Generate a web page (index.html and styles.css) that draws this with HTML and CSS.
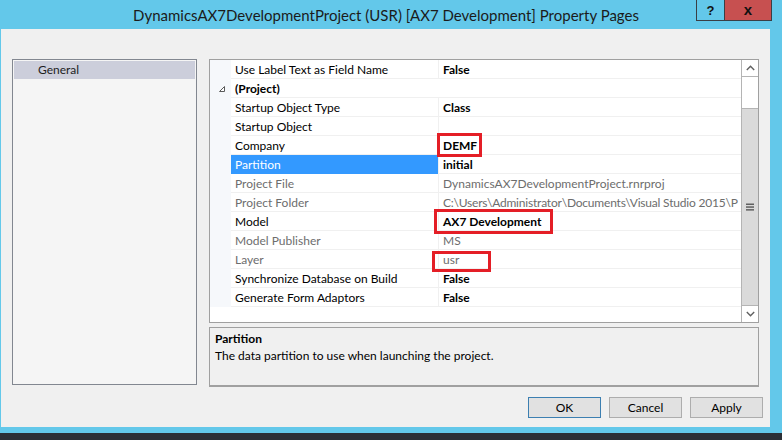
FILE: index.html
```
<!DOCTYPE html>
<html>
<head>
<meta charset="utf-8">
<link rel="stylesheet" href="styles.css">
</head>
<body>
<div class="window">
  <div class="titlebar">
    <div class="title">DynamicsAX7DevelopmentProject (USR) [AX7 Development] Property Pages</div>
    <div class="caption-buttons">
      <div class="cap-btn help">?</div>
      <div class="cap-btn close">x</div>
    </div>
  </div>
  <div class="client">
    <div class="main">
      <div class="nav">
        <div class="nav-item selected">General</div>
      </div>
      <div class="right">
        <div class="grid">
          <div class="rows">
            <div class="row"><div class="gut"></div><div class="lbl">Use Label Text as Field Name</div><div class="val b">False</div></div>
            <div class="row cat"><div class="gut"><svg width="8" height="8" viewBox="0 0 8 8"><polygon points="6.5,1.5 6.5,6.5 1.5,6.5" fill="#ffffff" stroke="#5a5a5a" stroke-width="1"/></svg></div><div class="lbl b">(Project)</div></div>
            <div class="row"><div class="gut"></div><div class="lbl">Startup Object Type</div><div class="val b">Class</div></div>
            <div class="row"><div class="gut"></div><div class="lbl">Startup Object</div><div class="val"></div></div>
            <div class="row"><div class="gut"></div><div class="lbl">Company</div><div class="val b">DEMF</div></div>
            <div class="row"><div class="gut"></div><div class="lbl sel">Partition</div><div class="val b">initial</div></div>
            <div class="row dim"><div class="gut"></div><div class="lbl">Project File</div><div class="val">DynamicsAX7DevelopmentProject.rnrproj</div></div>
            <div class="row dim"><div class="gut"></div><div class="lbl">Project Folder</div><div class="val tight">C:\Users\Administrator\Documents\Visual Studio 2015\P</div></div>
            <div class="row"><div class="gut"></div><div class="lbl">Model</div><div class="val b">AX7 Development</div></div>
            <div class="row dim"><div class="gut"></div><div class="lbl">Model Publisher</div><div class="val">MS</div></div>
            <div class="row dim"><div class="gut"></div><div class="lbl">Layer</div><div class="val">usr</div></div>
            <div class="row"><div class="gut"></div><div class="lbl">Synchronize Database on Build</div><div class="val b">False</div></div>
            <div class="row"><div class="gut"></div><div class="lbl">Generate Form Adaptors</div><div class="val b">False</div></div>
            <div class="mark mark-company"></div>
            <div class="mark mark-model"></div>
            <div class="mark mark-layer"></div>
          </div>
          <div class="scrollbar">
            <div class="sb-btn up"><svg width="9" height="6" viewBox="0 0 9 6"><polyline points="0.8,5 4.5,1.3 8.2,5" fill="none" stroke="#606060" stroke-width="1.4"/></svg></div>
            <div class="sb-gap"></div>
            <div class="sb-thumb"><svg width="8" height="8" viewBox="0 0 8 8"><rect x="0" y="0.5" width="8" height="1.5" fill="#606060"/><rect x="0" y="3.3" width="8" height="1.5" fill="#606060"/><rect x="0" y="6.1" width="8" height="1.5" fill="#606060"/></svg></div>
            <div class="sb-btn down"><svg width="9" height="6" viewBox="0 0 9 6"><polyline points="0.8,1 4.5,4.7 8.2,1" fill="none" stroke="#606060" stroke-width="1.4"/></svg></div>
          </div>
        </div>
        <div class="desc">
          <div class="desc-title">Partition</div>
          <div class="desc-text">The data partition to use when launching the project.</div>
        </div>
      </div>
    </div>
    <div class="buttons">
      <div class="btn default">OK</div>
      <div class="btn">Cancel</div>
      <div class="btn">Apply</div>
    </div>
  </div>
  <div class="bottom-edge"></div>
</div>
</body>
</html>
```
FILE: styles.css
```
html, body {
  margin: 0;
  padding: 0;
}
body {
  width: 782px;
  height: 440px;
  overflow: hidden;
  font-family: "Lato", "Liberation Sans", sans-serif;
  font-size: 12px;
  color: #000;
}
.window {
  width: 782px;
  height: 440px;
  background: #63c8ea;
  display: flex;
  flex-direction: column;
}
.titlebar {
  height: 29px;
  display: grid;
  grid-template-columns: 1fr;
  flex: none;
}
.title {
  grid-area: 1 / 1;
  text-align: center;
  padding-right: 10px;
  font-size: 15px;
  line-height: 30px;
  color: #1b1b1b;
}
.caption-buttons {
  grid-area: 1 / 1;
  justify-self: end;
  align-self: start;
  margin-right: 10px;
  display: flex;
  height: 21px;
  border: 1px solid #3a3f45;
  border-top: none;
  box-sizing: border-box;
}
.cap-btn {
  height: 20px;
  display: flex;
  align-items: center;
  justify-content: center;
  font-family: "Liberation Sans", sans-serif;
  font-weight: bold;
  color: #111;
}
.help {
  width: 27px;
  border-right: 1px solid #3a3f45;
  font-size: 13px;
}
.close {
  width: 46px;
  background: #c75050;
  font-size: 15px;
  line-height: 1;
  padding-bottom: 2px;
  box-sizing: border-box;
}
.client {
  margin-left: 1px;
  width: 769px;
  height: 398px;
  background: #f0f0f0;
  box-sizing: border-box;
  padding: 30px 7px 0 11px;
  display: flex;
  flex-direction: column;
  flex: none;
}
.main {
  display: flex;
  gap: 12px;
  align-items: flex-start;
}
.nav {
  width: 185px;
  height: 326px;
  box-sizing: border-box;
  border: 1px solid #828790;
  background: #f5f5f5;
  padding: 1px;
}
.nav-item {
  height: 18px;
  line-height: 18px;
  padding-left: 24px;
  color: #1e1e1e;
}
.nav-item.selected {
  background: #cccedb;
}
.right {
  width: 550px;
  display: flex;
  flex-direction: column;
  gap: 4px;
}
.grid {
  height: 264px;
  box-sizing: border-box;
  border: 1px solid #a0a0a0;
  background: #fff;
  display: flex;
}
.rows {
  flex: 1;
  position: relative;
  overflow: hidden;
}
.row {
  display: flex;
  height: 19px;
  line-height: 17px;
}
.gut {
  width: 21px;
  flex: none;
  background: #f6f8fb;
  display: flex;
  align-items: center;
  justify-content: center;
}
.gut svg {
  margin-left: 2px;
  margin-top: 1px;
}
.lbl {
  width: 207px;
  flex: none;
  box-sizing: border-box;
  padding: 1px 0 0 4px;
  border-bottom: 1px solid #f0f0f0;
  white-space: nowrap;
  overflow: hidden;
}
.row.cat .lbl {
  flex: 1;
  width: auto;
}
.val {
  flex: 1;
  min-width: 0;
  box-sizing: border-box;
  padding: 1px 0 0 4px;
  border-left: 1px solid #f0f0f0;
  border-bottom: 1px solid #f0f0f0;
  white-space: nowrap;
  overflow: hidden;
}
.val.tight {
  letter-spacing: -0.2px;
}
.b {
  font-weight: bold;
}
.lbl.sel {
  background: #3399ff;
  color: #fff;
  border-bottom-color: #3399ff;
}
.row.dim .lbl,
.row.dim .val {
  color: #6d6d6d;
}
.mark {
  position: absolute;
  border: 3px solid #e41e26;
  box-sizing: border-box;
}
.mark-company {
  left: 227px;
  top: 73px;
  width: 45px;
  height: 24px;
}
.mark-model {
  left: 224px;
  top: 149px;
  width: 119px;
  height: 25px;
}
.mark-layer {
  left: 222px;
  top: 191px;
  width: 59px;
  height: 21px;
}
.scrollbar {
  width: 17px;
  flex: none;
  box-sizing: border-box;
  border-left: 1px solid #b4b4b4;
  display: flex;
  flex-direction: column;
  background: #fff;
}
.sb-btn {
  height: 17px;
  flex: none;
  display: flex;
  align-items: center;
  justify-content: center;
  box-sizing: border-box;
}
.sb-btn.up {
  border-bottom: 1px solid #b4b4b4;
}
.sb-btn.down {
  border-top: 1px solid #b4b4b4;
}
.sb-gap {
  height: 31px;
  flex: none;
}
.sb-thumb {
  flex: 1;
  background: #dadada;
  border-top: 1px solid #b4b4b4;
  display: flex;
  align-items: center;
  justify-content: center;
}
.desc {
  height: 60px;
  box-sizing: border-box;
  border: 1px solid #a0a0a0;
  border-bottom-width: 2px;
  background: #f0f0f0;
  padding: 2px 5px 0 5px;
  line-height: 17px;
}
.desc-title {
  font-weight: bold;
}
.buttons {
  display: flex;
  justify-content: flex-end;
  gap: 8px;
  margin-top: 10px;
}
.btn {
  width: 73px;
  height: 21px;
  box-sizing: border-box;
  border: 1px solid #adadad;
  background: #e1e1e1;
  text-align: center;
  line-height: 19px;
  color: #000;
}
.btn.default {
  border-color: #3c7fb1;
}
.bottom-edge {
  margin-top: 6px;
  flex: 1;
  background: #2b2f36;
}
```
